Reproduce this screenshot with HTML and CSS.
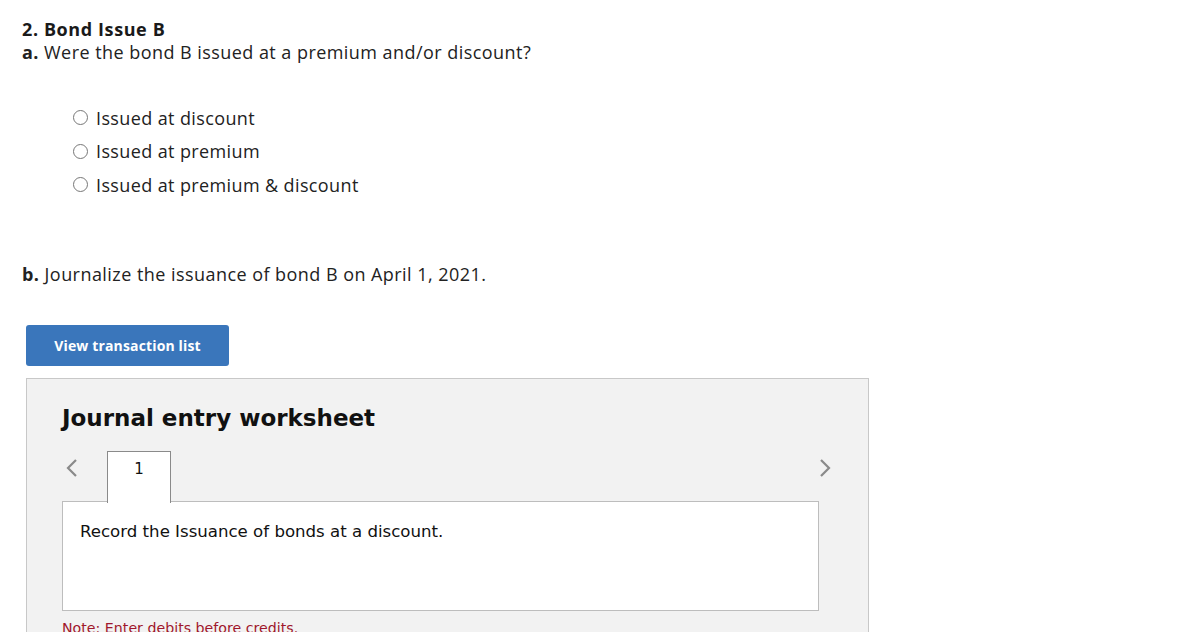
FILE: index.html
```html
<!DOCTYPE html>
<html>
<head>
<meta charset="utf-8">
<link rel="stylesheet" href="styles.css">
</head>
<body>
<div class="page">
  <h2 class="q-title">2. Bond Issue B</h2>
  <p class="q-line"><b>a.</b> Were the bond B issued at a premium and/or discount?</p>
  <ul class="options">
    <li><span class="radio"></span>Issued at discount</li>
    <li><span class="radio"></span>Issued at premium</li>
    <li><span class="radio"></span>Issued at premium &amp; discount</li>
  </ul>
  <p class="q-line part-b"><b>b.</b> Journalize the issuance of bond B on April 1, 2021.</p>
  <button class="btn">View transaction list</button>
  <section class="worksheet">
    <h3 class="ws-title">Journal entry worksheet</h3>
    <div class="tabs">
      <span class="nav prev"><svg width="16" height="20" viewBox="0 0 16 20"><path d="M12 2 L4 10 L12 18" fill="none" stroke="#8a8a8a" stroke-width="2.2"/></svg></span>
      <div class="tab">1</div>
      <span class="spacer"></span>
      <span class="nav next"><svg width="16" height="20" viewBox="0 0 16 20"><path d="M4 2 L12 10 L4 18" fill="none" stroke="#8a8a8a" stroke-width="2.2"/></svg></span>
    </div>
    <div class="panel">Record the Issuance of bonds at a discount.</div>
    <p class="note">Note: Enter debits before credits.</p>
  </section>
</div>
</body>
</html>
```
FILE: styles.css
```css
html, body { margin: 0; padding: 0; background: #fff; }
body { font-family: "Open Sans", "Lato", sans-serif; color: #1a1a1a; overflow: hidden; height: 632px; }
.page { padding: 18px 0 0 22px; }
.q-title { margin: 0; font-size: 18px; line-height: 22px; font-weight: 700; letter-spacing: 0.6px; color: #1a1a1a; }
.q-line { margin: 0; font-size: 18px; line-height: 24px; letter-spacing: 0.45px; color: #222; }
.q-line b { font-weight: 700; }
.options { list-style: none; margin: 37px 0 0 51px; padding: 0; }
.options li { display: flex; align-items: center; height: 33.5px; font-size: 18px; letter-spacing: 0.38px; color: #222; }
.radio { width: 13px; height: 13px; border: 1px solid #777; border-radius: 50%; margin-right: 8px; flex: none; }
.part-b { margin-top: 60px; }
.btn { display: block; margin: 39px 0 0 4px; width: 203px; height: 41px; background: #3a76bb; color: #fff; border: none; border-radius: 3px; font-family: "Open Sans", sans-serif; font-weight: 700; font-size: 14px; letter-spacing: 0.15px; padding: 0; }
.worksheet { box-sizing: border-box; margin: 12px 0 0 4px; width: 843px; height: 300px; background: #f2f2f2; border: 1px solid #c8c8c8; padding: 25px 49px 0 35px; font-family: "DejaVu Sans", Verdana, sans-serif; }
.ws-title { margin: 0; font-size: 23px; line-height: 28px; font-weight: 700; color: #111; }
.tabs { display: flex; align-items: flex-start; margin: 19px -14px -1px 0; height: 51px; }
.nav { display: flex; align-items: center; height: 34px; }
.prev { margin-left: 2px; width: 43px; }
.tab { width: 64px; background: #fff; border: 1px solid #8a8a8a; border-bottom: none; text-align: center; font-size: 15px; line-height: 16px; padding-top: 9px; box-sizing: border-box; height: 52px; position: relative; z-index: 1; color: #111; }
.spacer { flex: 1; }
.next { width: 16px; }
.panel { background: #fff; border: 1px solid #bdbdbd; padding: 19px 17px 0; box-sizing: border-box; height: 110px; font-size: 16.6px; line-height: 22px; color: #111; }
.note { margin: 8px 0 0; font-size: 14.2px; color: #a0172c; line-height: 18px; }
```
